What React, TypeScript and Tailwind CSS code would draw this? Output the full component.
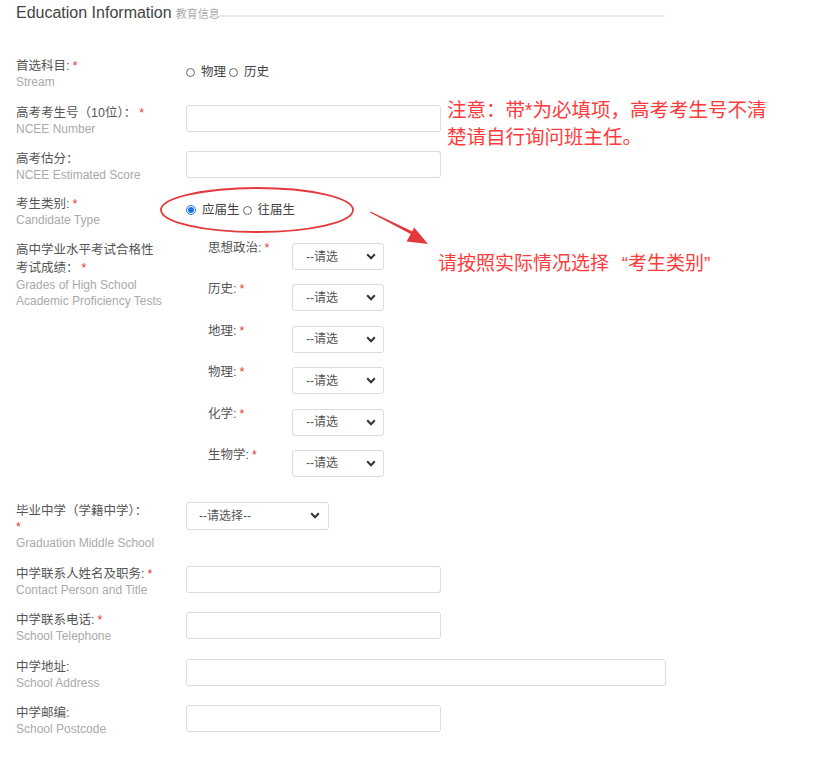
import React from "react";

const RED = "#e4393c";

function Star() {
  return <span className="ml-[3px] text-[#e4393c]">*</span>;
}

function Label({ zh, en, req }: { zh: React.ReactNode; en: React.ReactNode; req?: boolean }) {
  return (
    <div className="w-[170px] shrink-0">
      <div className="text-[12.5px] leading-4 text-[#555]">
        {zh}
        {req && <Star />}
      </div>
      <div className="text-[12px] leading-4 text-[#aaa]">{en}</div>
    </div>
  );
}

function Input({ w = "w-[255px]" }: { w?: string }) {
  return <div className={`${w} h-[27px] shrink-0 rounded-[3px] border border-[#dcdcdc] bg-white`} />;
}

function Chevron() {
  return (
    <svg width="10" height="7" viewBox="0 0 10 7" className="shrink-0">
      <path d="M1.2 1.3 L5 5.2 L8.8 1.3" fill="none" stroke="#333" strokeWidth="2" />
    </svg>
  );
}

function SmallSelect() {
  return (
    <div className="mt-[3px] flex h-[27px] w-[92px] items-center rounded-[3px] border border-[#dcdcdc] bg-white pl-[13px] pr-[7px]">
      <span className="whitespace-nowrap text-[12px] text-[#555]">--请选</span>
      <span className="flex-1" />
      <Chevron />
    </div>
  );
}

function Radio({ checked }: { checked?: boolean }) {
  if (checked)
    return (
      <span className="inline-flex h-[10px] w-[10px] items-center justify-center rounded-full border border-[#1a73e8] bg-white">
        <span className="h-[6px] w-[6px] rounded-full bg-[#1a73e8]" />
      </span>
    );
  return <span className="inline-block h-[9px] w-[9px] rounded-full border border-[#666] bg-white" />;
}

function RadioGroup({ items, checked }: { items: string[]; checked?: number }) {
  return (
    <div className="flex self-start items-center pt-[6px] text-[12.5px] leading-4 text-[#444]">
      {items.map((t, i) => (
        <span key={t} className="flex items-center">
          <Radio checked={checked === i} />
          <span className="ml-[6px] mr-[3px]">{t}</span>
        </span>
      ))}
    </div>
  );
}

const subjects = ["思想政治", "历史", "地理", "物理", "化学", "生物学"];

export default function App() {
  return (
    <div className="relative h-[764px] w-[840px] overflow-hidden bg-white font-['Liberation_Sans','Noto_Sans_CJK_SC',sans-serif]">
      {/* header */}
      <div className="flex w-[665px] items-start pl-4 pt-[3px]">
        <div className="flex items-baseline whitespace-nowrap">
          <span className="text-[16px] leading-5 text-[#444]">Education Information</span>
          <span className="ml-[4px] text-[11px] text-[#aaa]">教育信息</span>
        </div>
        <div className="mt-[12px] h-[2px] flex-1 bg-[#e8e8e8]" />
      </div>

      {/* form */}
      <div className="flex flex-col pl-4 pt-[35px]">
        <div className="flex">
          <Label zh="首选科目:" en="Stream" req />
          <RadioGroup items={["物理", "历史"]} />
        </div>

        <div className="mt-[15px] flex">
          <Label zh="高考考生号（10位）：" en="NCEE Number" req />
          <Input />
        </div>

        <div className="mt-[14px] flex">
          <Label zh="高考估分：" en="NCEE Estimated Score" />
          <Input />
        </div>

        <div className="mt-[13px] flex">
          <Label zh="考生类别:" en="Candidate Type" req />
          <RadioGroup items={["应届生", "往届生"]} checked={0} />
        </div>

        <div className="mt-[12px] flex">
          <div className="w-[170px] shrink-0 pt-[1px]">
            <div className="text-[12.5px] leading-[18px] text-[#555]">
              高中学业水平考试合格性
              <br />
              考试成绩：
              <Star />
            </div>
            <div className="text-[12px] leading-4 text-[#aaa]">
              Grades of High School
              <br />
              Academic Proficiency Tests
            </div>
          </div>
          <div className="ml-[22px] flex flex-col">
            {subjects.map((s, i) => (
              <div key={s} className={`flex items-start ${i < subjects.length - 1 ? "h-[41.4px]" : ""}`}>
                <div className="w-[84px] shrink-0 text-[12.5px] leading-4 text-[#555]">
                  {s}:
                  <Star />
                </div>
                <SmallSelect />
              </div>
            ))}
          </div>
        </div>

        <div className="mt-[26px] flex">
          <div className="w-[170px] shrink-0">
            <div className="text-[12.5px] leading-4 text-[#555]">
              毕业中学（学籍中学）：
              <br />
              <span className="text-[#e4393c]">*</span>
            </div>
            <div className="text-[12px] leading-4 text-[#aaa]">Graduation Middle School</div>
          </div>
          <div className="-mt-[1px] flex h-[28px] w-[143px] items-center rounded-[3px] border border-[#dcdcdc] bg-white pl-[12px] pr-[8px]">
            <span className="flex-1 whitespace-nowrap text-[12px] text-[#555]">--请选择--</span>
            <Chevron />
          </div>
        </div>

        <div className="mt-[15px] flex">
          <Label zh="中学联系人姓名及职务:" en="Contact Person and Title" req />
          <Input />
        </div>

        <div className="mt-[14px] flex">
          <Label zh="中学联系电话:" en="School Telephone" req />
          <Input />
        </div>

        <div className="mt-[15px] flex">
          <Label zh="中学地址:" en="School Address" />
          <Input w="w-[480px]" />
        </div>

        <div className="mt-[14px] flex">
          <Label zh="中学邮编:" en="School Postcode" />
          <Input />
        </div>
      </div>

      {/* annotations */}
      <div className="absolute left-[447px] top-[97px] text-[19.5px] leading-[27px] text-[#ff3b3b]">
        注意：带*为必填项，高考考生号不清
        <br />
        楚请自行询问班主任。
      </div>
      <div className="absolute left-[438px] top-[250px] whitespace-nowrap text-[19px] leading-[27px] text-[#ff3b3b]">
        请按照实际情况选择
        <span className="inline-block w-[19px] text-right">“</span>
        考生类别
        <span className="inline-block w-[19px] text-left">”</span>
      </div>
      <svg className="absolute left-[158px] top-[184px]" width="198" height="52" viewBox="0 0 198 52">
        <ellipse cx="99" cy="26" rx="96" ry="22" fill="none" stroke={RED} strokeWidth="1.8" />
      </svg>
      <svg className="absolute left-[360px] top-[200px]" width="80" height="60" viewBox="0 0 80 60">
        <polygon points="10,12.5 10.6,11.6 52.5,31.4 51.6,34.4" fill={RED} />
        <polygon points="68,44 46.6,41.6 54.2,27.6" fill={RED} />
      </svg>
    </div>
  );
}
